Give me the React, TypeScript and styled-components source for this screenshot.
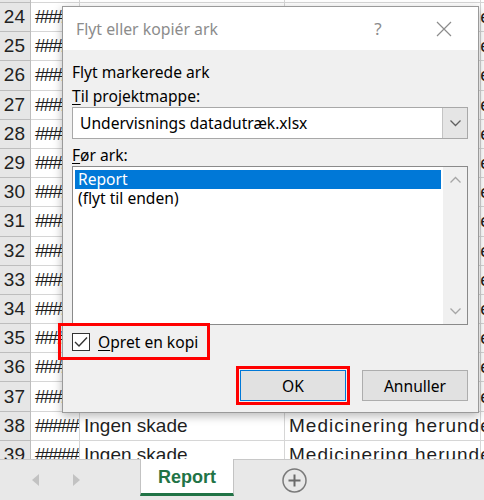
import React from 'react';
import styled, { createGlobalStyle } from 'styled-components';

const GlobalStyle = createGlobalStyle`
  html, body {
    margin: 0;
    padding: 0;
    background: #fff;
  }
  body {
    overflow: hidden;
  }
`;

const Screen = styled.div`
  position: relative;
  width: 484px;
  height: 500px;
  overflow: hidden;
  background: #fff;
  display: flex;
  flex-direction: column;
`;

/* ---------- spreadsheet behind the dialog ---------- */

const Sheet = styled.div`
  flex: 1;
  overflow: hidden;
  font-family: 'Liberation Sans', Arial, sans-serif;
  font-size: 19px;
  color: #1f1f1f;
`;

const SheetRows = styled.div`
  margin-top: -26.2px;
`;

const Row = styled.div`
  display: grid;
  grid-template-columns: 31px 49px 205px 196px 100px;
  height: 29.2px;
`;

const Cell = styled.div<{ $header?: boolean; $hash?: boolean; $wide?: boolean }>`
  display: flex;
  align-items: center;
  box-sizing: border-box;
  padding: 0 4px;
  white-space: nowrap;
  overflow: ${(p) => (p.$header || p.$hash ? 'hidden' : 'visible')};
  border-right: 1px solid ${(p) => (p.$header ? '#bdbdbd' : '#d6d6d6')};
  border-bottom: 1px solid ${(p) => (p.$header ? '#bdbdbd' : '#d6d6d6')};
  background: ${(p) => (p.$header ? '#e6e6e6' : 'transparent')};
  justify-content: ${(p) => (p.$header ? 'flex-end' : 'flex-start')};
  padding-right: ${(p) => (p.$header ? '5px' : '4px')};
  letter-spacing: ${(p) => (p.$hash ? '-2px' : p.$wide ? '1px' : '0')};
  color: ${(p) => (p.$header ? '#222' : '#1f1f1f')};
`;

/* ---------- sheet tab bar ---------- */

const TabBar = styled.div`
  height: 41px;
  flex-shrink: 0;
  display: flex;
  align-items: stretch;
  background: #e8e8e8;
  border-top: 1px solid #c8c8c8;
  box-sizing: border-box;
  font-family: 'Liberation Sans', Arial, sans-serif;
`;

const NavArrows = styled.div`
  width: 140px;
  display: flex;
  align-items: center;
  gap: 32px;
  padding-left: 32px;
  box-sizing: border-box;
`;

const SheetTab = styled.div`
  width: 94px;
  margin-top: -1px;
  background: #fff;
  border-left: 1px solid #c3c3c3;
  border-right: 1px solid #c3c3c3;
  border-bottom: 3px solid #217346;
  margin-bottom: 4px;
  box-sizing: border-box;
  display: flex;
  align-items: center;
  justify-content: center;
  font-weight: 700;
  font-size: 18px;
  color: #217346;
  padding-top: 2px;
`;

const AddSheet = styled.div`
  margin-left: 48px;
  display: flex;
  align-items: center;
`;

/* ---------- dialog ---------- */

const Dialog = styled.div`
  position: absolute;
  left: 62px;
  top: 6px;
  width: 417px;
  box-sizing: border-box;
  border: 1px solid #9a9a9a;
  background: #f0f0f0;
  box-shadow: 0 3px 9px rgba(0, 0, 0, 0.28);
  font-family: 'Noto Sans', 'Open Sans', sans-serif;
  font-size: 15.6px;
  color: #000;
`;

const TitleBar = styled.div`
  height: 43px;
  background: #fff;
  display: flex;
  align-items: center;
  padding-left: 13px;
`;

const Title = styled.div`
  flex: 1;
  font-size: 15.8px;
  color: #8c8c8c;
`;

const TitleButton = styled.div<{ $w: number }>`
  width: ${(p) => p.$w}px;
  display: flex;
  align-items: center;
  justify-content: center;
  color: #8c8c8c;
  font-size: 17px;
`;

const Body = styled.div`
  padding: 11px 10px 11px 9px;
  display: flex;
  flex-direction: column;
`;

const Label = styled.div<{ $gap?: number }>`
  line-height: 22px;
  margin-top: ${(p) => p.$gap ?? 0}px;
`;

const Key = styled.span`
  text-decoration: underline;
  text-underline-offset: 2px;
`;

const Combo = styled.div`
  height: 32px;
  box-sizing: border-box;
  border: 1px solid #a8a8a8;
  background: #fff;
  display: flex;
  align-items: stretch;
`;

const ComboText = styled.div`
  flex: 1;
  display: flex;
  align-items: center;
  padding-left: 7px;
`;

const ComboButton = styled.div`
  width: 24px;
  background: #e5e5e5;
  border-left: 1px solid #c4c4c4;
  display: flex;
  align-items: center;
  justify-content: center;
`;

const ListBox = styled.div`
  height: 159px;
  box-sizing: border-box;
  border: 1px solid #8a8a8a;
  background: #fff;
  display: flex;
`;

const ListItems = styled.div`
  flex: 1;
  padding: 3px 2px 0 2px;
`;

const ListItem = styled.div<{ $selected?: boolean }>`
  height: 19px;
  line-height: 19px;
  padding-left: 3px;
  background: ${(p) => (p.$selected ? '#0078d7' : 'transparent')};
  color: ${(p) => (p.$selected ? '#fff' : '#000')};
`;

const ScrollBar = styled.div`
  width: 24px;
  background: #f0f0f0;
  display: flex;
  flex-direction: column;
  justify-content: space-between;
  align-items: center;
  padding: 9px 0 9px;
`;

const CheckRow = styled.label<{ $marked?: boolean }>`
  margin-top: 1px;
  margin-left: -11px;
  align-self: flex-start;
  height: 31px;
  padding: 0 9px 0 11px;
  display: flex;
  align-items: center;
  gap: 8px;
  outline: ${(p) => (p.$marked ? '3px solid #ff0000' : 'none')};
`;

const CheckBox = styled.span`
  width: 18px;
  height: 18px;
  box-sizing: border-box;
  border: 1px solid #333;
  background: #fff;
  display: flex;
  align-items: center;
  justify-content: center;
`;

const Buttons = styled.div`
  margin-top: 13px;
  display: flex;
  justify-content: flex-end;
  gap: 16px;
`;

const Button = styled.div<{ $primary?: boolean; $marked?: boolean }>`
  width: 106px;
  height: 31px;
  box-sizing: border-box;
  background: #e1e1e1;
  border: 1px solid ${(p) => (p.$primary ? '#0078d7' : '#adadad')};
  display: flex;
  align-items: center;
  justify-content: center;
  outline: ${(p) => (p.$marked ? '3px solid #ff0000' : 'none')};
  outline-offset: 1px;
`;

const Chevron: React.FC<{ up?: boolean; color?: string }> = ({ up, color = '#606060' }) => (
  <svg width="11" height="7" viewBox="0 0 11 7">
    <path
      d={up ? 'M0.5 6.5 L5.5 1.5 L10.5 6.5' : 'M0.5 0.5 L5.5 5.5 L10.5 0.5'}
      fill="none"
      stroke={color}
      strokeWidth="1.3"
    />
  </svg>
);

const rows = Array.from({ length: 18 }, (_, i) => 23 + i);

export default function App() {
  return (
    <Screen>
      <GlobalStyle />
      <Sheet>
        <SheetRows>
          {rows.map((n) => (
            <Row key={n}>
              <Cell $header>{n}</Cell>
              <Cell $hash>#####</Cell>
              <Cell>Ingen skade</Cell>
              <Cell $wide>Medicinering herunder</Cell>
              <Cell />
            </Row>
          ))}
        </SheetRows>
      </Sheet>

      <TabBar>
        <NavArrows>
          <svg width="8" height="12" viewBox="0 0 8 12">
            <path d="M7 0 L0 6 L7 12 Z" fill="#c2c2c2" />
          </svg>
          <svg width="8" height="12" viewBox="0 0 8 12">
            <path d="M1 0 L8 6 L1 12 Z" fill="#c2c2c2" />
          </svg>
        </NavArrows>
        <SheetTab>Report</SheetTab>
        <AddSheet>
          <svg width="25" height="25" viewBox="0 0 25 25">
            <circle cx="12.5" cy="12.5" r="11.5" fill="none" stroke="#7a7a7a" strokeWidth="1.5" />
            <path d="M12.5 6.5 V18.5 M6.5 12.5 H18.5" stroke="#6a6a6a" strokeWidth="2" />
          </svg>
        </AddSheet>
      </TabBar>

      <Dialog>
        <TitleBar>
          <Title>Flyt eller kopiér ark</Title>
          <TitleButton $w={82}>?</TitleButton>
          <TitleButton $w={50} style={{ marginRight: 9 }}>
            <svg width="16" height="16" viewBox="0 0 16 16">
              <path d="M1 1 L15 15 M15 1 L1 15" stroke="#8c8c8c" strokeWidth="1.2" />
            </svg>
          </TitleButton>
        </TitleBar>
        <Body>
          <Label>Flyt markerede ark</Label>
          <Label $gap={2}>
            <Key>T</Key>il projektmappe:
          </Label>
          <Combo>
            <ComboText>Undervisnings datadutræk.xlsx</ComboText>
            <ComboButton>
              <Chevron />
            </ComboButton>
          </Combo>
          <Label $gap={5}>
            <Key>F</Key>ør ark:
          </Label>
          <ListBox>
            <ListItems>
              <ListItem $selected>Report</ListItem>
              <ListItem>(flyt til enden)</ListItem>
            </ListItems>
            <ScrollBar>
              <Chevron up color="#a6a6a6" />
              <Chevron color="#a6a6a6" />
            </ScrollBar>
          </ListBox>
          <CheckRow $marked>
            <CheckBox>
              <svg width="14" height="12" viewBox="0 0 14 12">
                <path d="M1 6 L5 10 L13 1.5" fill="none" stroke="#333" strokeWidth="1.4" />
              </svg>
            </CheckBox>
            <span>
              <Key>O</Key>pret en kopi
            </span>
          </CheckRow>
          <Buttons>
            <Button $primary $marked>
              OK
            </Button>
            <Button>Annuller</Button>
          </Buttons>
        </Body>
      </Dialog>
    </Screen>
  );
}
